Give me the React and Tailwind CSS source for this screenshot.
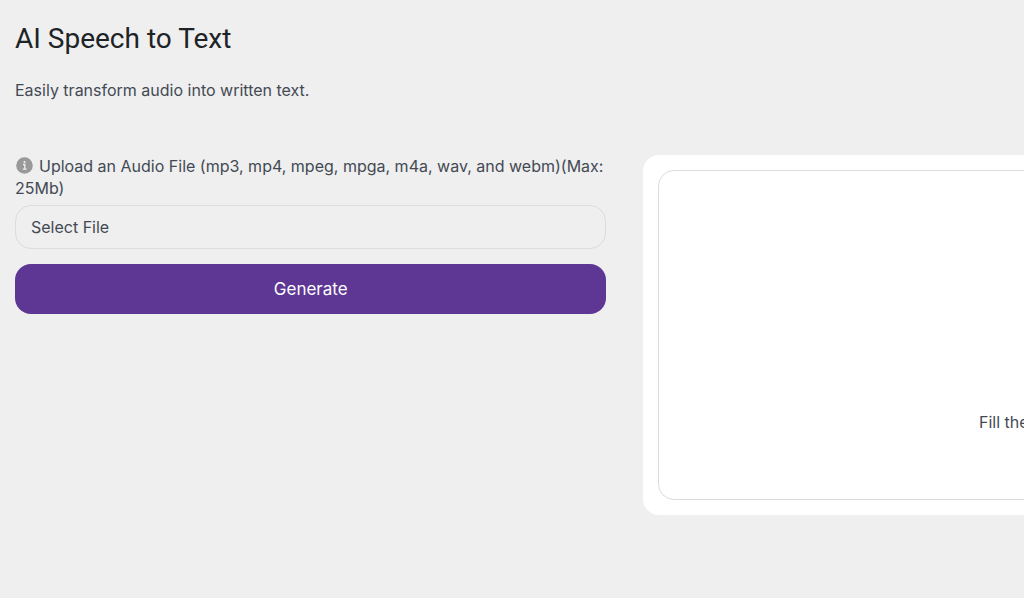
import { useState } from 'react';

const InfoIcon = () => (
  <svg
    viewBox="0 0 18 18"
    className="inline-block w-[18px] h-[18px] ml-px mr-[5px] align-[-3px]"
    aria-hidden="true"
  >
    <circle cx="8.5" cy="8.5" r="8.3" fill="#999999" />
    <circle cx="8.5" cy="5" r="1.1" fill="#efefef" />
    <path d="M7 7.5h1.8v4.5M6.8 12.2h3.8" fill="none" stroke="#efefef" strokeWidth="1.3" />
  </svg>
);

const FileField = ({ label, fileName, onChange }) => (
  <div>
    <label htmlFor="audio" className="block leading-[22px]">
      <InfoIcon />
      {label}
    </label>
    <label
      htmlFor="audio"
      className="mt-[6px] flex items-center h-11 px-[15px] border border-[#dcdcdc] rounded-2xl cursor-pointer"
    >
      {fileName || 'Select File'}
      <input id="audio" type="file" accept="audio/*,video/*" onChange={onChange} className="sr-only" />
    </label>
  </div>
);

const ResultPanel = () => (
  <section className="bg-white rounded-2xl p-[15px]">
    <div className="h-[330px] border border-[#dcdcdc] rounded-2xl flex items-end justify-center pb-[66px]">
      <p className="leading-[22px]">Fill the</p>
    </div>
  </section>
);

const App = () => {
  const [fileName, setFileName] = useState('');

  const handleFileChange = (e) => {
    const file = e.target.files[0];
    setFileName(file ? file.name : '');
  };

  const handleSubmit = (e) => {
    e.preventDefault();
  };

  return (
    <main className="min-h-screen overflow-x-hidden bg-[#efefef] px-[15px] pt-5 font-['Inter',sans-serif] text-base text-[#434a54]">
      <h1 className="font-['Roboto',sans-serif] text-[28px] leading-[38px] text-[#1d2327]">AI Speech to Text</h1>
      <p className="mt-[21px] leading-[22px]">Easily transform audio into written text.</p>

      <div className="mt-[54px] grid grid-cols-[59.5%_72.5%] gap-[37px] items-start">
        <form onSubmit={handleSubmit}>
          <FileField
            label="Upload an Audio File (mp3, mp4, mpeg, mpga, m4a, wav, and webm)(Max: 25Mb)"
            fileName={fileName}
            onChange={handleFileChange}
          />
          <button
            type="submit"
            className="mt-[15px] w-full h-[50px] pt-0.5 rounded-2xl bg-[#5e3693] text-white text-[17px] cursor-pointer"
          >
            Generate
          </button>
        </form>

        <ResultPanel />
      </div>
    </main>
  );
};

export default App;
